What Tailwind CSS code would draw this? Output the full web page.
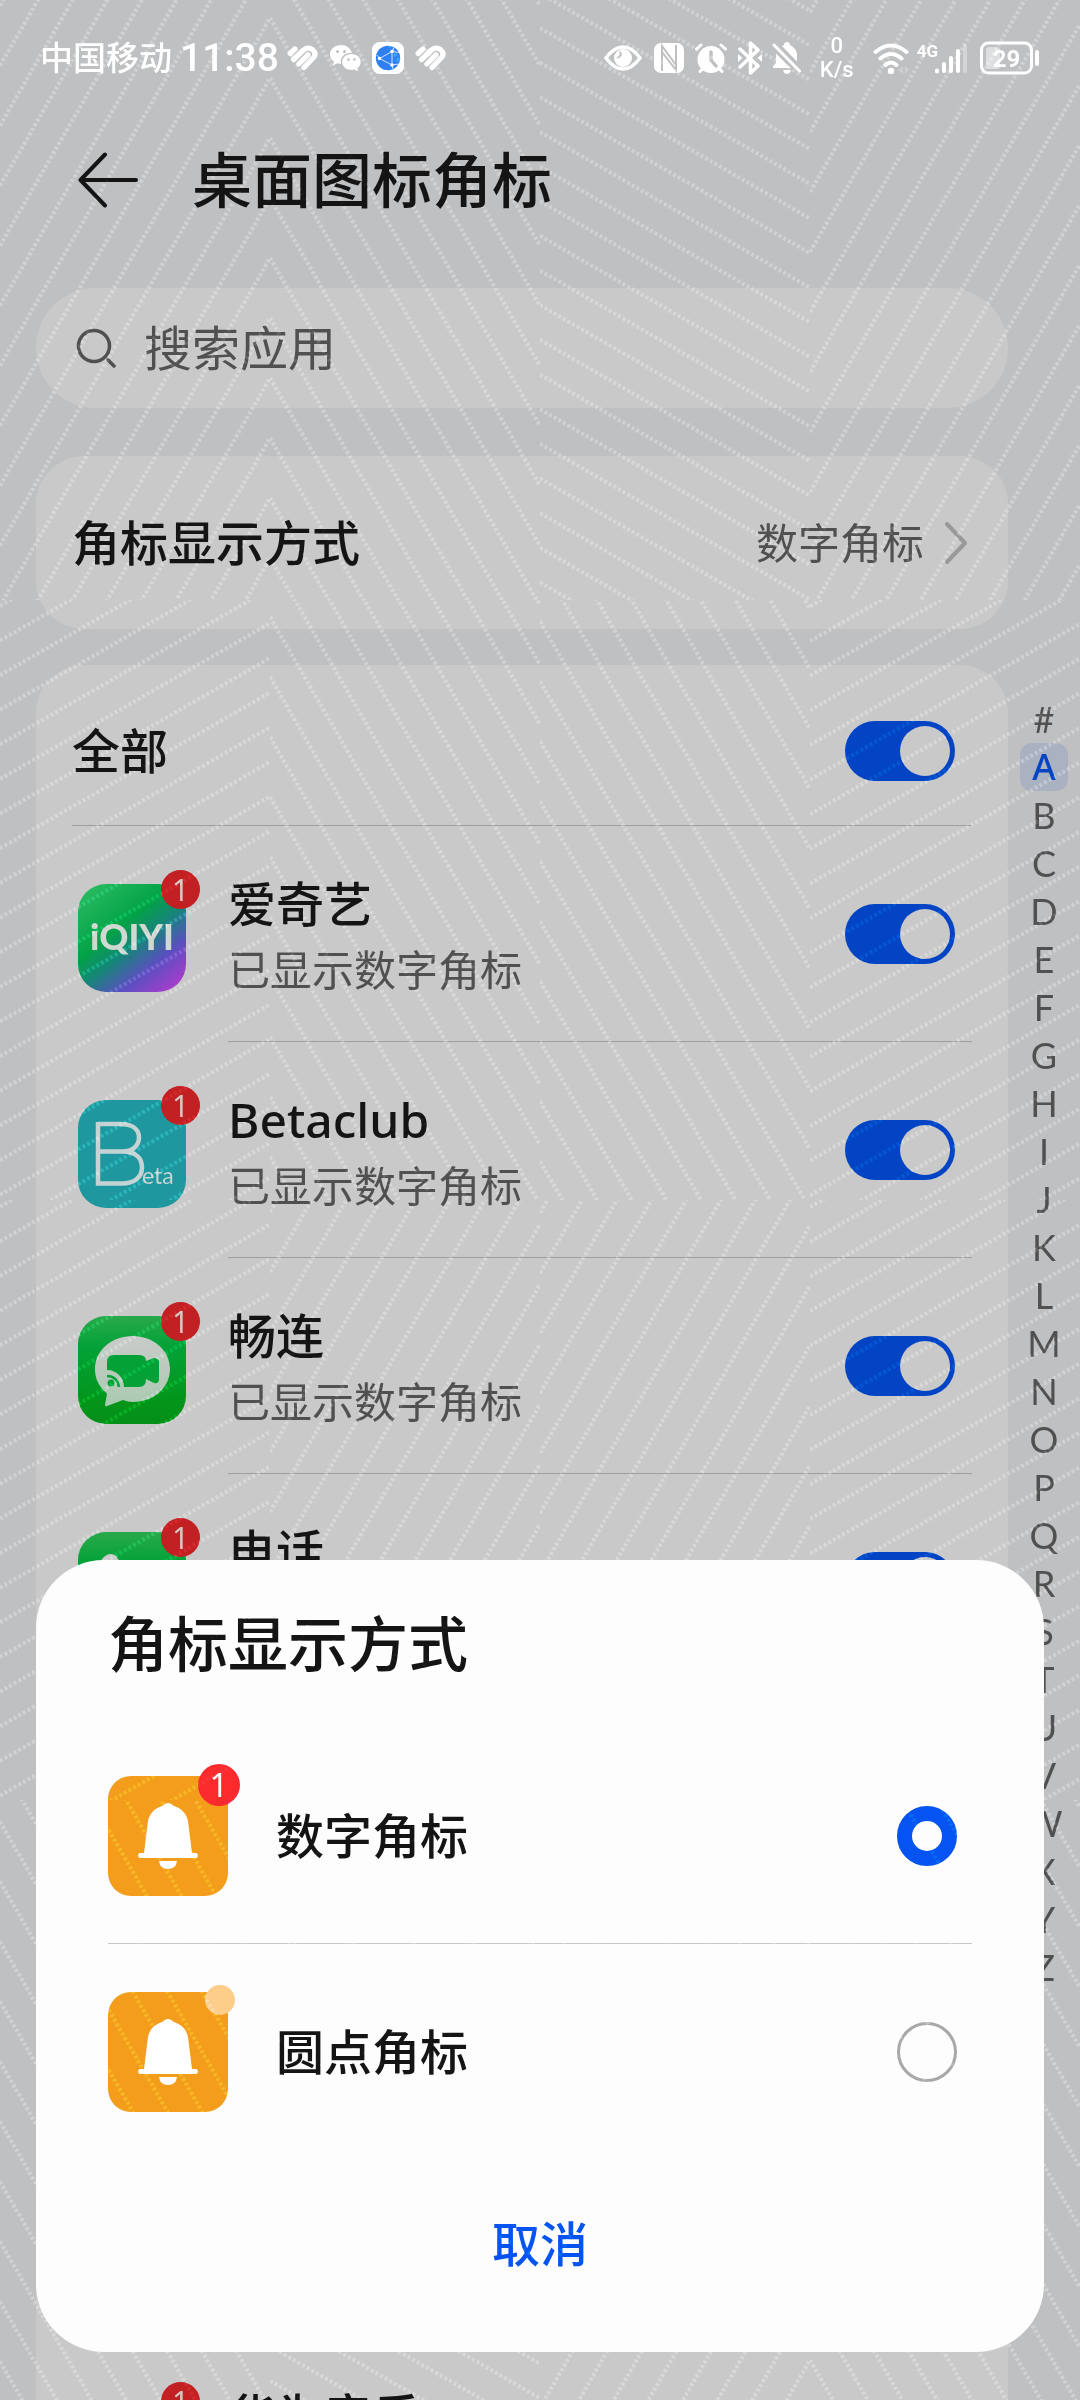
<!DOCTYPE html>
<html lang="zh-CN">
<head>
<meta charset="utf-8">
<meta name="viewport" content="width=device-width, initial-scale=1">
<title>桌面图标角标</title>
<script src="https://cdn.jsdelivr.net/npm/@tailwindcss/browser@4"></script>
</head>
<body class="bg-[#bec0c2] font-['Noto_Sans','Noto_Sans_CJK_SC',sans-serif] text-[#141414]">
<div class="relative flex h-screen min-h-[1700px] flex-col overflow-hidden bg-[#bec0c2]">

  <!-- Status bar -->
  <div class="flex h-[116px] shrink-0 items-center justify-between pr-10 pl-10 text-white">
    <div class="flex items-center">
      <span class="text-[33px] leading-[48px] font-medium">中国移动</span>
      <span class="ml-2 font-['Roboto',sans-serif] text-[39px] leading-[48px] font-medium">11:38</span>
      <svg class="ml-2 h-[26px] w-[31px]" viewBox="0 0 31 26" fill="none" stroke="#fff" stroke-width="5.200" stroke-linecap="round"><path d="M3.200 8.500 8 4"/><path d="M6.500 14.500 16.500 5Q21 1.500 25.500 4.500 30 8.500 26.500 12.500L17 22.500"/><path d="M11.800 19 21 9.800"/></svg>
      <svg class="ml-3 h-[27px] w-[31px]" viewBox="0 0 31 27"><path fill="#fff" d="M11 0C5 0 0 4 0 9.500c0 3 1.500 5.500 4 7.200L3 20.500l4.300-2.200c1.200.4 2.400.5 3.700.5-1.500-6 3.500-11.500 11-11C20.700 3.200 16.200 0 11 0Z"/><path fill="#fff" d="M21.500 9c-5.200 0-9.300 3.600-9.300 8s4.100 8 9.300 8c1 0 2-.1 3-.4l3.800 2-1-3.300c2-1.500 3.400-3.700 3.400-6.300 0-4.400-4-8-9.200-8Z"/><g fill="#bec0c2"><circle cx="7.500" cy="6.500" r="1.500"/><circle cx="14.500" cy="6.500" r="1.500"/><circle cx="18.500" cy="14.500" r="1.300"/><circle cx="24.500" cy="14.500" r="1.300"/></g></svg>
      <svg class="ml-[11px] size-8" viewBox="0 0 32 32"><rect width="32" height="32" rx="8" fill="#fff"/><circle cx="16" cy="16" r="12.200" fill="#2e80f2"/><g stroke="#cfe2ff" stroke-width="1" fill="none"><path d="M7.500 16.500 20 9.500M7.500 16.500 20 23M20 9.500V23M7.500 16.500 5 13M20 9.500 22 5.500M20 23l1 4M20 9.500l7 1M20 23l7-1"/></g><g fill="#fff"><circle cx="7.500" cy="16.500" r="1.700"/><circle cx="20" cy="9.500" r="1.800"/><circle cx="20" cy="23" r="1.800"/></g></svg>
      <svg class="ml-[11px] h-[26px] w-[31px]" viewBox="0 0 31 26" fill="none" stroke="#fff" stroke-width="5.200" stroke-linecap="round"><path d="M3.200 8.500 8 4"/><path d="M6.500 14.500 16.500 5Q21 1.500 25.500 4.500 30 8.500 26.500 12.500L17 22.500"/><path d="M11.800 19 21 9.800"/></svg>
    </div>
    <div class="flex items-center">
      <svg class="h-[26px] w-[38px]" viewBox="0 0 38 26"><path d="M2 13Q10 2 19 2t17 11Q28 24 19 24T2 13Z" fill="none" stroke="#fff" stroke-width="3.500"/><circle cx="19" cy="13" r="9" fill="#fff"/><path d="M15 5.500a5 5 0 0 1-3.500 7.500 5 5 0 0 0 6.500-3.500 5 5 0 0 0-3-4Z" fill="#bec0c2"/></svg>
      <svg class="ml-3 size-[30px]" viewBox="0 0 30 30"><rect width="30" height="30" rx="7" fill="#fff"/><path d="M8 28V3l14 19V10M22 2v25L8 9" fill="none" stroke="#bec0c2" stroke-width="2"/></svg>
      <svg class="ml-[11px] h-[30px] w-8" viewBox="0 0 32 30"><circle cx="16" cy="16.500" r="13.500" fill="#fff"/><path d="M1.500 6 6 2M30.500 6 26 2M5 28.500l4-4M27 28.500l-4-4" stroke="#fff" stroke-width="3" stroke-linecap="round"/><path d="M16 9v8l5 6" fill="none" stroke="#bec0c2" stroke-width="3.500" stroke-linecap="round"/></svg>
      <svg class="ml-[11px] h-[34px] w-6" viewBox="0 0 24 34"><path d="m2 8 18 17-7.500 7V2L20 9 2 26" fill="none" stroke="#fff" stroke-width="3.500" stroke-linejoin="round" stroke-linecap="round"/><path d="m0 13 4.500 4L0 21ZM24 13l-4.500 4 4.500 4Z" fill="#fff"/></svg>
      <svg class="ml-[10px] h-8 w-[29px]" viewBox="0 0 29 32"><path fill="#fff" d="M4 11.500 18.500 26H1v-2l3-3ZM10 4l2-1q0-3 3-3t3 3q6 3 7 9v7.500ZM11 28h8q-1 4-4 4t-4-4Z"/><path d="m2 3 25.500 26" stroke="#fff" stroke-width="3" stroke-linecap="round"/></svg>
      <div class="ml-4 w-10 text-center font-['Roboto',sans-serif] text-[22px] font-medium"><div class="leading-6">0</div><div class="leading-6">K/s</div></div>
      <svg class="ml-4 h-[31px] w-9" viewBox="0 0 36 31"><g fill="none" stroke="#fff" stroke-width="4" stroke-linecap="round"><path d="M2.500 9Q18-4 33.500 9M7.500 15.500q10.500-9 21 0M12.500 22q5.500-5 11 0"/></g><circle cx="18" cy="28" r="3.200" fill="#fff"/><path d="m25 27 5-4v8ZM36 27l-4-4v8Z" fill="#cdcfd0"/></svg>
      <div class="ml-2 flex items-start"><span class="font-['Roboto',sans-serif] text-[17px] leading-[18px] font-bold">4G</span>
      <svg class="-ml-1 h-8 w-[34px]" viewBox="0 0 34 32" stroke-linecap="round" stroke-width="4" stroke="#fff"><path d="M3 28.500v1M10 22v7M17 16v13M24 9v20"/><path d="M31 4v25" stroke="#d3d4d5"/></svg></div>
      <svg class="ml-3 h-[34px] w-[60px]" viewBox="0 0 60 34"><rect x="1.500" y="2" width="50" height="30" rx="7" fill="none" stroke="#fff" stroke-width="3"/><rect x="6" y="6" width="14" height="22" rx="3" fill="#dedfe0"/><path d="M57 11v12" stroke="#fff" stroke-width="4" stroke-linecap="round"/><text x="26.500" y="25.500" text-anchor="middle" fill="#fff" font-family="Roboto, sans-serif" font-weight="700" font-size="24">29</text></svg>
    </div>
  </div>

  <!-- Title bar -->
  <header class="flex h-[128px] shrink-0 items-center pl-[78px]">
    <button type="button" aria-label="返回"><svg class="h-14 w-[60px]" viewBox="0 0 60 56" fill="none" stroke="#141414" stroke-width="4" stroke-linecap="round" stroke-linejoin="round"><path d="M27 2.500 2.500 28 27 53.500M3 28h55"/></svg></button>
    <h1 class="ml-[54px] text-[60px] leading-[80px] font-medium">桌面图标角标</h1>
  </header>

  <!-- Search -->
  <label class="mt-11 mr-[72px] ml-9 flex h-[120px] shrink-0 items-center gap-7 rounded-full bg-[#c9c9c9] pr-10 pl-10">
    <svg class="h-[40px] w-[40px] shrink-0" viewBox="0 0 40 40" fill="none" stroke="#505050" stroke-width="3.500" stroke-linecap="round"><circle cx="18" cy="18" r="15.500"/><path d="m32 32 6 6"/></svg>
    <input type="text" placeholder="搜索应用" aria-label="搜索应用" class="min-w-0 flex-1 bg-transparent text-[48px] leading-[72px] outline-none placeholder:text-[#505050]">
  </label>

  <!-- Display mode -->
  <button type="button" class="mt-12 mr-[72px] ml-9 flex h-[173px] shrink-0 items-center rounded-[48px] bg-[#c9c9c9] pr-10 pl-9 text-left">
    <span class="flex-1 text-[48px] leading-[72px] font-medium">角标显示方式</span>
    <span class="text-[42px] leading-[60px] text-[#505050]">数字角标</span>
    <svg class="ml-5 h-11 w-6" viewBox="0 0 24 44" fill="none" stroke="#999" stroke-width="4" stroke-linecap="round" stroke-linejoin="round"><path d="m3 3 18 19L3 41"/></svg>
  </button>

  <div class="mt-9 flex min-h-0 flex-1 pl-9">
    <!-- App list -->
    <main class="min-w-0 flex-1 overflow-hidden rounded-t-[48px] bg-[#c9c9c9] px-9 pt-3">
      <label class="flex h-[149px] items-center border-b border-[#9e9e9e] pr-[17px]">
        <span class="flex-1 text-[48px] leading-[72px] font-medium">全部</span>
        <input type="checkbox" role="switch" checked class="flex h-[60px] w-[110px] appearance-none rounded-full bg-[#999] p-[5px] before:size-[50px] before:rounded-full before:bg-[#c9c9c9] before:content-[''] checked:bg-[#0244c4] checked:before:ml-auto">
      </label>
      <ul>
        <li class="flex h-[216px] items-center pl-[6px]">
          <div class="relative mt-2 size-[108px] shrink-0">
            <svg class="size-full" viewBox="0 0 108 108"><defs><linearGradient id="iq" x1="0.100" y1="0" x2="0.900" y2="1"><stop offset="0" stop-color="#2abb62"/><stop offset=".38" stop-color="#04a247"/><stop offset=".55" stop-color="#158678"/><stop offset=".75" stop-color="#5a4fc0"/><stop offset="1" stop-color="#b13bcd"/></linearGradient></defs><rect width="108" height="108" rx="28" fill="url(#iq)"/><text x="54" y="66" text-anchor="middle" fill="#d0d8d2" font-family="Lato, sans-serif" font-weight="900" font-size="36">iQIYI</text></svg>
            <span class="absolute -top-[14px] -right-[14px] flex size-[39px] items-center justify-center rounded-full bg-[#c32023] text-[30px] leading-[39px] text-[#dfc0c0]">1</span>
          </div>
          <label for="app-iqiyi" class="ml-[42px] flex h-full flex-1 items-center border-b border-[#9e9e9e] pr-[17px]">
            <span class="flex-1"><span class="block text-[48px] leading-[72px] font-medium">爱奇艺</span><span class="block text-[42px] leading-[60px] text-[#505050]">已显示数字角标</span></span>
            <input id="app-iqiyi" type="checkbox" role="switch" checked class="flex h-[60px] w-[110px] appearance-none rounded-full bg-[#999] p-[5px] before:size-[50px] before:rounded-full before:bg-[#c9c9c9] before:content-[''] checked:bg-[#0244c4] checked:before:ml-auto">
          </label>
        </li>
        <li class="flex h-[216px] items-center pl-[6px]">
          <div class="relative mt-2 size-[108px] shrink-0">
            <svg class="size-full" viewBox="0 0 108 108"><rect width="108" height="108" rx="28" fill="#1f979e"/><path d="M20 24h22c12 0 19 5 19 13.500S54 51.500 44 51.500H20M44 51.500c13 0 20 6 20 16s-8 16-20 16H20V22" fill="none" stroke="#c4d3d3" stroke-width="4.500"/><text x="64" y="84" fill="#c4d3d3" font-family="Lato, sans-serif" font-size="23">eta</text></svg>
            <span class="absolute -top-[14px] -right-[14px] flex size-[39px] items-center justify-center rounded-full bg-[#c32023] text-[30px] leading-[39px] text-[#dfc0c0]">1</span>
          </div>
          <label for="app-beta" class="ml-[42px] flex h-full flex-1 items-center border-b border-[#9e9e9e] pr-[17px]">
            <span class="flex-1"><span class="block text-[48px] leading-[72px] font-medium">Betaclub</span><span class="block text-[42px] leading-[60px] text-[#505050]">已显示数字角标</span></span>
            <input id="app-beta" type="checkbox" role="switch" checked class="flex h-[60px] w-[110px] appearance-none rounded-full bg-[#999] p-[5px] before:size-[50px] before:rounded-full before:bg-[#c9c9c9] before:content-[''] checked:bg-[#0244c4] checked:before:ml-auto">
          </label>
        </li>
        <li class="flex h-[216px] items-center pl-[6px]">
          <div class="relative mt-2 size-[108px] shrink-0">
            <svg class="size-full" viewBox="0 0 108 108"><defs><linearGradient id="gr" x1="0" y1="0" x2="0" y2="1"><stop offset="0" stop-color="#2aa94b"/><stop offset=".28" stop-color="#03a238"/><stop offset=".8" stop-color="#03951a"/><stop offset="1" stop-color="#058f18"/></linearGradient><linearGradient id="bb" x1="0" y1="0" x2="0" y2="1"><stop offset="0" stop-color="#c9cbc9"/><stop offset="1" stop-color="#a9cab0"/></linearGradient></defs><rect width="108" height="108" rx="28" fill="url(#gr)"/><path d="M54.500 20C34 20 17 34 17 53c0 10 4 18 12 24.500L27 89q0 2 2 1l16-6q5 2 10 2c20 0 37-14 37-33S75 20 54.500 20Z" fill="url(#bb)"/><path d="M36 39h25q7 0 7 6l8-3q5 0 5 4v17q0 5-5 4l-8-4q0 8-7 8H46c0-9-7-17-17-17V46q0-7 7-7Z" fill="#04a136"/><circle cx="33" cy="67" r="3.500" fill="#04a136"/><path d="M29 60q10 0 12 11" fill="none" stroke="#04a136" stroke-width="2.500"/></svg>
            <span class="absolute -top-[14px] -right-[14px] flex size-[39px] items-center justify-center rounded-full bg-[#c32023] text-[30px] leading-[39px] text-[#dfc0c0]">1</span>
          </div>
          <label for="app-meetime" class="ml-[42px] flex h-full flex-1 items-center border-b border-[#9e9e9e] pr-[17px]">
            <span class="flex-1"><span class="block text-[48px] leading-[72px] font-medium">畅连</span><span class="block text-[42px] leading-[60px] text-[#505050]">已显示数字角标</span></span>
            <input id="app-meetime" type="checkbox" role="switch" checked class="flex h-[60px] w-[110px] appearance-none rounded-full bg-[#999] p-[5px] before:size-[50px] before:rounded-full before:bg-[#c9c9c9] before:content-[''] checked:bg-[#0244c4] checked:before:ml-auto">
          </label>
        </li>
        <li class="flex h-[216px] items-center pl-[6px]">
          <div class="relative mt-2 size-[108px] shrink-0">
            <svg class="size-full" viewBox="0 0 108 108"><rect width="108" height="108" rx="28" fill="url(#gr)"/><path d="M24 27q7-8 14-3l8 12q3 6-5 11 6 13 18 20 6-8 12-5l12 8q5 6-4 14C58 98 10 52 24 27Z" fill="#c9cbc9"/></svg>
            <span class="absolute -top-[14px] -right-[14px] flex size-[39px] items-center justify-center rounded-full bg-[#c32023] text-[30px] leading-[39px] text-[#dfc0c0]">1</span>
          </div>
          <label for="app-phone" class="ml-[42px] flex h-full flex-1 items-center border-b border-[#9e9e9e] pr-[17px]">
            <span class="flex-1"><span class="block text-[48px] leading-[72px] font-medium">电话</span><span class="block h-[60px]"></span></span>
            <input id="app-phone" type="checkbox" role="switch" checked class="flex h-[60px] w-[110px] appearance-none rounded-full bg-[#999] p-[5px] before:size-[50px] before:rounded-full before:bg-[#c9c9c9] before:content-[''] checked:bg-[#0244c4] checked:before:ml-auto">
          </label>
        </li>
        <li class="mt-[648px] flex h-[216px] items-center pl-[6px]">
          <div class="relative mt-2 size-[108px] shrink-0">
            <span class="absolute -top-[14px] -right-[14px] flex size-[39px] items-center justify-center rounded-full bg-[#c32023] text-[30px] leading-[39px] text-[#dfc0c0]">1</span>
          </div>
          <div class="ml-[42px] flex h-full flex-1 items-center">
            <span class="flex-1"><span class="block text-[48px] leading-[72px] font-medium">华为音乐</span><span class="block h-[60px]"></span></span>
          </div>
        </li>
      </ul>
    </main>

    <!-- Alphabet index -->
    <nav aria-label="字母索引" class="flex w-[72px] shrink-0 flex-col items-center pt-[30px] font-['Lato',sans-serif] text-[36px] leading-[48px] text-[#505050]">
      <a href="#">#</a>
      <a href="#A" class="w-12 rounded-xl bg-[#aab2c1] text-center font-['Noto_Sans',sans-serif] font-medium text-[#0244c4]">A</a>
      <a href="#B">B</a><a href="#C">C</a><a href="#D">D</a><a href="#E">E</a><a href="#F">F</a><a href="#G">G</a><a href="#H">H</a><a href="#I">I</a><a href="#J">J</a><a href="#K">K</a><a href="#L">L</a><a href="#M">M</a><a href="#N">N</a><a href="#O">O</a><a href="#P">P</a><a href="#Q">Q</a><a href="#R">R</a><a href="#S">S</a><a href="#T">T</a><a href="#U">U</a><a href="#V">V</a><a href="#W">W</a><a href="#X">X</a><a href="#Y">Y</a><a href="#Z">Z</a>
    </nav>
  </div>

  <!-- Bottom sheet -->
  <section role="dialog" aria-labelledby="sheet-title" class="absolute inset-x-9 bottom-12 rounded-[68px] bg-[#fdfdfd] px-[72px] pb-6">
    <h2 id="sheet-title" class="flex h-[168px] items-center text-[60px] leading-[80px] font-medium">角标显示方式</h2>
    <label class="flex h-[216px] items-center border-b border-[#c8c8c8] pr-[15px]">
      <span class="relative size-[120px]">
        <svg class="size-full" viewBox="0 0 120 120"><rect width="120" height="120" rx="23" fill="#f49c1c"/><path d="M54 30q6-6 12 0c9 3 14 9 14.500 19L84 77h4.500q3 2.500 0 5h-57q-3-2.500 0-5H36l3.500-28C40 39 45 33 54 30ZM51 85h18q-1 8-9 8t-9-8Z" fill="#fff"/></svg>
        <span class="absolute -top-3 -right-3 flex size-[42px] items-center justify-center rounded-full bg-[#fa2a2d] text-[32px] leading-[42px] text-white">1</span>
      </span>
      <span class="ml-12 flex-1 text-[48px] leading-[72px] font-medium">数字角标</span>
      <input type="radio" name="badge" checked class="size-[60px] appearance-none rounded-full border-[3px] border-[#a8a8a8] checked:border-[15px] checked:border-[#0553f0]">
    </label>
    <label class="flex h-[216px] items-center pr-[15px]">
      <span class="relative size-[120px]">
        <svg class="size-full" viewBox="0 0 120 120"><rect width="120" height="120" rx="23" fill="#f49c1c"/><path d="M54 30q6-6 12 0c9 3 14 9 14.500 19L84 77h4.500q3 2.500 0 5h-57q-3-2.500 0-5H36l3.500-28C40 39 45 33 54 30ZM51 85h18q-1 8-9 8t-9-8Z" fill="#fff"/></svg>
        <span class="absolute -top-[7px] -right-[7px] size-[30px] rounded-full bg-[#fdcd8a]"></span>
      </span>
      <span class="ml-12 flex-1 text-[48px] leading-[72px] font-medium">圆点角标</span>
      <input type="radio" name="badge" class="size-[60px] appearance-none rounded-full border-[3px] border-[#a8a8a8] checked:border-[15px] checked:border-[#0553f0]">
    </label>
    <button type="button" class="block h-[168px] w-full text-[48px] leading-[72px] font-medium text-[#0553f0]">取消</button>
  </section>

  <!-- Dotted security texture over the whole screen -->
  <svg id="texture" class="pointer-events-none absolute inset-0 h-full w-full mix-blend-overlay" aria-hidden="true" fill="none" stroke="#fff" stroke-opacity=".28" stroke-width="4" stroke-dasharray="3 2.300"></svg>
</div>
<script>
  // Each 270x600 cell: line slope in degrees and a point that one line passes through.
  const cells = [
    [[-60, 270, 18], [60, 270, 18], [30, 540, 28], [-60, 810, 192]],
    [[-30, 270, 935], [60, 270, 857], [60, 810, 789], [-30, 810, 745]],
    [[-30, 270, 1328], [-60, 270, 1392], [-60, 540, 1393], [-30, 810, 1519]],
    [[60, 133, 2352], [30, 270, 2277], [-60, 810, 2360], [60, 810, 2360]]
  ];
  let out = '';
  cells.forEach((row, r) => row.forEach(([deg, px, py], c) => {
    const x0 = c * 270, y0 = r * 600, s = Math.tan(deg * Math.PI / 180);
    const step = 30 / Math.cos(deg * Math.PI / 180);
    let d = '';
    for (let k = -60; k < 60; k++) {
      const b = py + k * step - s * px;
      const ya = s * x0 + b, yb = s * (x0 + 270) + b;
      if (Math.max(ya, yb) < y0 || Math.min(ya, yb) > y0 + 600) continue;
      d += `M${x0} ${ya.toFixed(1)}L${x0 + 270} ${yb.toFixed(1)}`;
    }
    out += `<clipPath id="c${r}${c}"><rect x="${x0}" y="${y0}" width="270" height="600"/></clipPath><path clip-path="url(#c${r}${c})" d="${d}"/>`;
  }));
  document.getElementById('texture').innerHTML = out;
</script>
</body>
</html>
